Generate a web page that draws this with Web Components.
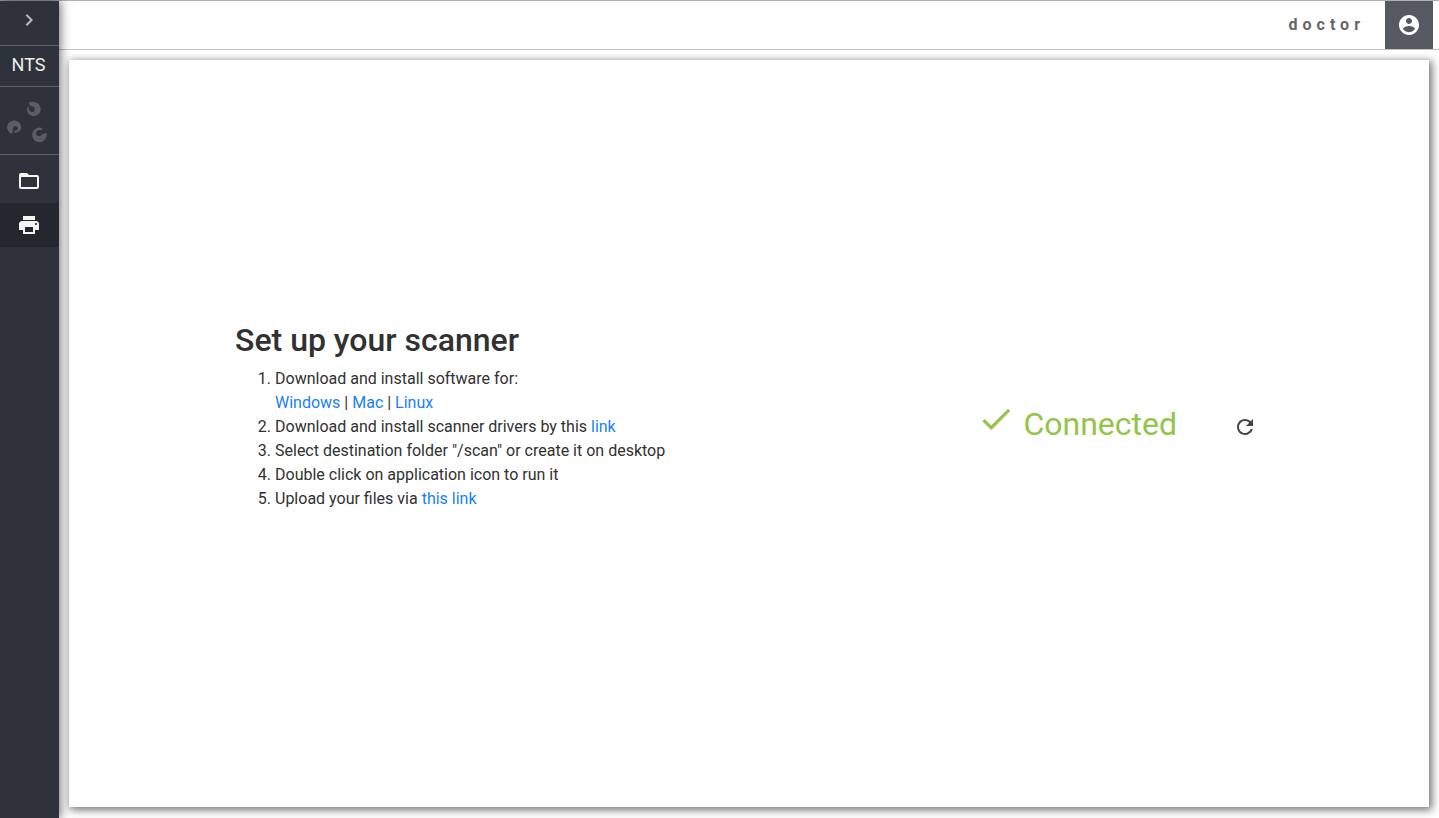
<!DOCTYPE html>
<html lang="en">
<head>
<meta charset="utf-8">
<title>Scanner setup</title>
<style>
  html, body { height: 100%; margin: 0; }
  body { --ink: #313131; --link: #1a7ff5; --line: #5b5f66; --side: #2e323a; --green: #93c549; background: #fff; color: var(--ink); font: 16px/24px Roboto, sans-serif; }
</style>
</head>
<body>
<scan-app></scan-app>
<script>
function define(name, html) {
  const t = document.createElement('template');
  t.innerHTML = html;
  customElements.define(name, class extends HTMLElement {
    connectedCallback() {
      if (!this.shadowRoot) this.attachShadow({ mode: 'open' }).appendChild(t.content.cloneNode(true));
    }
  });
}

define('side-nav', `
<style>
  :host { display: flex; flex-direction: column; width: 59px; background: var(--side); color: #eee; box-shadow: 0 0 10px 1px rgba(0,0,0,0.6); z-index: 1; }
  button { all: unset; display: flex; align-items: center; justify-content: center; height: 44px; padding-right: 2px; cursor: pointer; }
  svg { display: block; fill: currentColor; }
  .toggle { border-bottom: 1px solid var(--line); color: #b9bab9; }
  .toggle svg { padding-bottom: 6px; }
  .name { font-size: 18px; line-height: 38px; padding: 0 2px 2px 0; text-align: center; border-bottom: 1px solid var(--line); }
  .logo { height: 67px; border-bottom: 1px solid var(--line); color: #595d64; }
  nav { display: flex; flex-direction: column; padding-top: 4px; }
  nav button { color: #f5f5f2; }
  nav button.active { background: #25272f; }
</style>
<button class="toggle" aria-label="Expand menu"><svg width="24" height="24" viewBox="0 0 24 24"><path d="M10 6 8.590 7.410 13.170 12l-4.580 4.590L10 18l6-6z"/></svg></button>
<div class="name">NTS</div>
<div class="logo">
  <svg width="59" height="67" viewBox="0 0 59 67" aria-hidden="true">
    <path d="M29 15.200C34 13.500 40.700 16 40.700 22.500A6.900 6.900 0 0 1 27 23.500C26.800 21.500 27.500 20 28.800 19.300C28.300 21.500 28.900 23.700 30.800 24.700C33.200 25.500 35 24 34.800 22C34.500 20 33 19.200 31 19.200C29.700 18.500 28.800 17.200 29 15.200Z"/>
    <path d="M11.500 47.200C8.500 45 7 42.800 7 39.800A7.200 7.200 0 0 1 21.300 39.800C21.300 43 19 45.500 14.800 46L14.200 43.800C16.800 43.900 18.200 42.500 17.700 40.700C16.500 38.700 13.900 39 13 41C12.300 43 13.800 44 11.500 47.200Z"/>
    <path d="M46.700 47.200A7.300 7.300 0 1 1 42.500 41.300L42 43.500C39 42.500 36 43.500 36 46.200C36 48.700 38.500 49.900 40.700 48.700C42.200 47.500 42 46.200 46.700 46.200Z"/>
  </svg>
</div>
<nav>
  <button aria-label="Files"><svg width="24" height="24" viewBox="0 0 24 24"><path d="M20 6h-8l-2-2H4c-1.100 0-1.990.9-1.990 2L2 18c0 1.100.9 2 2 2h16c1.100 0 2-.9 2-2V8c0-1.100-.9-2-2-2zm0 12H4V8h16v10z"/></svg></button>
  <button class="active" aria-label="Scanner"><svg width="24" height="24" viewBox="0 0 24 24"><path d="M19 8H5c-1.660 0-3 1.340-3 3v6h4v4h12v-4h4v-6c0-1.660-1.340-3-3-3zm-3 11H8v-5h8v5zm3-7c-.55 0-1-.45-1-1s.45-1 1-1 1 .45 1 1-.45 1-1 1zm-1-9H6v4h12V3z"/></svg></button>
</nav>`);

define('top-bar', `
<style>
  :host { display: flex; align-items: stretch; justify-content: flex-end; height: 48px; padding-right: 6px; border-bottom: 1px solid #c4c4c4; }
  span { padding-right: 20px; color: #666; font-weight: 700; line-height: 48px; letter-spacing: 5px; }
  button { display: flex; align-items: center; justify-content: center; width: 48px; padding: 0; border: 0; background: #565961; color: #fff; cursor: pointer; }
  svg { fill: currentColor; }
</style>
<span><slot></slot></span>
<button aria-label="Account"><svg width="24" height="24" viewBox="0 0 24 24"><path d="M12 2C6.480 2 2 6.480 2 12s4.480 10 10 10 10-4.480 10-10S17.520 2 12 2zm0 3c1.660 0 3 1.340 3 3s-1.340 3-3 3-3-1.340-3-3 1.340-3 3-3zm0 14.200c-2.500 0-4.710-1.280-6-3.220.03-1.990 4-3.080 6-3.080 1.990 0 5.970 1.090 6 3.080-1.290 1.940-3.500 3.220-6 3.220z"/></svg></button>`);

define('setup-steps', `
<style>
  :host { display: block; padding-bottom: 36px; }
  h1 { margin: 0 0 8px; font-size: 32px; line-height: 38px; font-weight: 500; }
  ol { margin: 0; padding-left: 40px; }
  a { color: var(--link); text-decoration: none; }
</style>
<h1>Set up your scanner</h1>
<ol>
  <li>Download and install software for:<br><a href="#windows">Windows</a> | <a href="#mac">Mac</a> | <a href="#linux">Linux</a></li>
  <li>Download and install scanner drivers by this <a href="#drivers">link</a></li>
  <li>Select destination folder "/scan" or create it on desktop</li>
  <li>Double click on application icon to run it</li>
  <li>Upload your files via <a href="#upload">this link</a></li>
</ol>`);

define('scanner-status', `
<style>
  :host { display: flex; align-items: center; padding-bottom: 20px; color: var(--green); font-size: 32px; line-height: 38px; }
  svg { display: block; fill: currentColor; }
  .check { padding-bottom: 10px; margin-right: 8px; }
  button { display: flex; margin: 6px 0 0 48px; padding: 8px; border: 0; background: none; color: #444; cursor: pointer; }
</style>
<svg class="check" width="38" height="38" viewBox="0 0 24 24" aria-hidden="true"><path d="M9 16.170 4.830 12l-1.420 1.410L9 19 21 7l-1.410-1.410z"/></svg>
<span><slot></slot></span>
<button aria-label="Refresh"><svg width="24" height="24" viewBox="0 0 24 24"><path d="M17.650 6.350C16.200 4.900 14.210 4 12 4c-4.420 0-7.990 3.580-7.990 8s3.570 8 7.990 8c3.730 0 6.840-2.550 7.730-6h-2.080c-.82 2.330-3.040 4-5.650 4-3.310 0-6-2.690-6-6s2.690-6 6-6c1.660 0 3.140.69 4.220 1.780L13 11h7V4l-2.350 2.350z"/></svg></button>`);

define('scan-app', `
<style>
  :host { display: flex; box-sizing: border-box; min-height: 100%; border-top: 1px solid #b0b0b0; }
  .content { flex: 1; display: flex; flex-direction: column; min-width: 0; }
  main { flex: 1; display: flex; flex-wrap: wrap; align-items: center; justify-content: space-between; margin: 10px 10px 11px; padding: 0 164px 0 166px; background: #fff; box-shadow: 2px 2px 8px 1px rgba(0,0,0,0.55); }
</style>
<side-nav></side-nav>
<div class="content">
  <top-bar>doctor</top-bar>
  <main>
    <setup-steps></setup-steps>
    <scanner-status>Connected</scanner-status>
  </main>
</div>`);
</script>
</body>
</html>
